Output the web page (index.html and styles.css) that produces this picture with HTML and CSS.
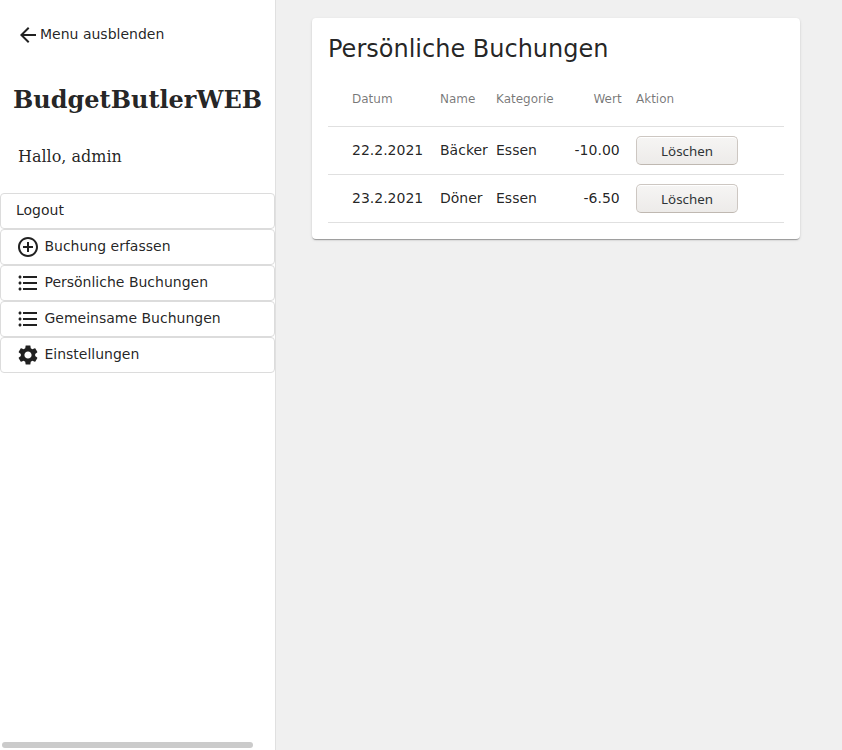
FILE: index.html
```html
<!DOCTYPE html>
<html lang="de">
<head>
<meta charset="utf-8">
<title>BudgetButlerWEB</title>
<link rel="stylesheet" href="styles.css">
</head>
<body>
<nav class="sidebar">
  <button class="toggle"><svg class="icon" viewBox="0 0 24 24"><path d="M20 11H7.83l5.59-5.59L12 4l-8 8 8 8 1.41-1.41L7.83 13H20v-2z"/></svg><span>Menu ausblenden</span></button>
  <h1 class="brand">BudgetButlerWEB</h1>
  <p class="greeting">Hallo, admin</p>
  <div class="menu">
    <a class="item"><span>Logout</span></a>
    <a class="item"><svg class="icon" viewBox="0 0 24 24"><path d="M13 7h-2v4H7v2h4v4h2v-4h4v-2h-4V7zm-1-5C6.48 2 2 6.48 2 12s4.48 10 10 10 10-4.48 10-10S17.52 2 12 2zm0 18c-4.41 0-8-3.59-8-8s3.59-8 8-8 8 3.59 8 8-3.59 8-8 8z"/></svg><span>Buchung erfassen</span></a>
    <a class="item"><svg class="icon" viewBox="0 0 24 24"><path d="M4 10.5c-.83 0-1.5.67-1.5 1.5s.67 1.5 1.5 1.5 1.5-.67 1.5-1.5-.67-1.5-1.5-1.5zm0-6c-.83 0-1.5.67-1.5 1.5S3.170 7.500 4 7.500 5.500 6.830 5.500 6 4.830 4.500 4 4.500zm0 12c-.83 0-1.5.68-1.5 1.5s.68 1.5 1.5 1.5 1.5-.68 1.5-1.5-.67-1.5-1.5-1.5zM7 19h14v-2H7v2zm0-6h14v-2H7v2zm0-8v2h14V5H7z"/></svg><span>Persönliche Buchungen</span></a>
    <a class="item"><svg class="icon" viewBox="0 0 24 24"><path d="M4 10.5c-.83 0-1.5.67-1.5 1.5s.67 1.5 1.5 1.5 1.5-.67 1.5-1.5-.67-1.5-1.5-1.5zm0-6c-.83 0-1.5.67-1.5 1.5S3.170 7.500 4 7.500 5.500 6.830 5.500 6 4.830 4.500 4 4.500zm0 12c-.83 0-1.5.68-1.5 1.5s.68 1.5 1.5 1.5 1.5-.68 1.5-1.5-.67-1.5-1.5-1.5zM7 19h14v-2H7v2zm0-6h14v-2H7v2zm0-8v2h14V5H7z"/></svg><span>Gemeinsame Buchungen</span></a>
    <a class="item"><svg class="icon" viewBox="0 0 24 24"><path d="M19.140 12.940c.04-.3.06-.61.06-.94 0-.32-.02-.64-.07-.94l2.030-1.580c.18-.14.23-.41.12-.61l-1.920-3.320c-.12-.22-.37-.29-.59-.22l-2.390.96c-.5-.38-1.030-.7-1.620-.94l-.36-2.540c-.04-.24-.24-.41-.48-.41h-3.840c-.24 0-.43.17-.47.41l-.36 2.540c-.59.24-1.130.57-1.620.94l-2.390-.96c-.22-.08-.47 0-.59.22L2.740 8.870c-.12.21-.08.47.12.61l2.030 1.580c-.05.3-.09.63-.09.94s.02.64.07.94l-2.030 1.580c-.18.14-.23.41-.12.61l1.920 3.320c.12.22.37.29.59.22l2.390-.96c.5.38 1.030.7 1.620.94l.36 2.540c.05.24.24.41.48.41h3.840c.24 0 .44-.17.47-.41l.36-2.540c.59-.24 1.130-.56 1.620-.94l2.390.96c.22.08.47 0 .59-.22l1.920-3.320c.12-.22.07-.47-.12-.61l-2.010-1.580zM12 15.600c-1.980 0-3.600-1.620-3.600-3.600s1.620-3.600 3.600-3.600 3.600 1.620 3.600 3.600-1.620 3.600-3.600 3.600z"/></svg><span>Einstellungen</span></a>
  </div>
  <div class="scrollbar"></div>
</nav>
<main class="content">
  <section class="card">
    <h2 class="title">Persönliche Buchungen</h2>
    <table class="bookings">
      <thead><tr><th class="date">Datum</th><th class="name">Name</th><th class="category">Kategorie</th><th class="value">Wert</th><th>Aktion</th></tr></thead>
      <tbody>
        <tr><td class="date">22.2.2021</td><td>Bäcker</td><td>Essen</td><td class="value">-10.00</td><td class="action"><button class="delete">Löschen</button></td></tr>
        <tr><td class="date">23.2.2021</td><td>Döner</td><td>Essen</td><td class="value">-6.50</td><td class="action"><button class="delete">Löschen</button></td></tr>
      </tbody>
    </table>
  </section>
</main>
</body>
</html>
```
FILE: styles.css
```css
* { box-sizing: border-box; }
body {
  margin: 0;
  height: 750px;
  display: flex;
  overflow: hidden;
  background: #f0f0f0;
  color: rgba(0, 0, 0, .87);
  font: 14px/20px "DejaVu Sans", sans-serif;
}
.sidebar {
  width: 276px;
  height: 750px;
  flex: none;
  display: flex;
  flex-direction: column;
  background: #fff;
  border-right: 1px solid #e0e0e0;
}
.icon { width: 24px; height: 24px; flex: none; fill: currentColor; }
.toggle {
  display: flex;
  align-items: center;
  height: 36px;
  margin: 17px 0 0 16px;
  padding: 0;
  border: 0;
  background: none;
  color: inherit;
  font: inherit;
}
.toggle span { margin-top: -2px; }
.brand {
  margin: 31px 0 0 13px;
  font: bold 24px/32px "DejaVu Serif", serif;
}
.greeting {
  margin: 31px 0 0 18px;
  font: 16px/20px "DejaVu Serif", serif;
}
.menu { margin-top: 26px; }
.item {
  display: flex;
  align-items: center;
  height: 36px;
  padding-left: 15px;
  border: 1px solid #dcdcdc;
  border-radius: 4px;
}
.item .icon { margin-right: 4.45px; }
.item span { margin-top: -2px; }
.scrollbar {
  width: 251px;
  height: 6px;
  margin: auto 0 2px 2px;
  border-radius: 3px;
  background: #cbcbcb;
}
.content { flex: 1; padding: 18px 42px 0 36px; }
.card {
  height: 221px;
  padding: 15px 16px 16px;
  border-radius: 4px;
  background: #fff;
  box-shadow: 0 2px 1px -1px rgba(0,0,0,.2), 0 1px 1px rgba(0,0,0,.14), 0 1px 3px rgba(0,0,0,.12);
}
.title { margin: 0 0 6px; font-size: 24px; font-weight: 400; line-height: 32px; }
.bookings { width: 456px; table-layout: fixed; border-collapse: separate; border-spacing: 0; }
th, td { padding: 0; border-bottom: 1px solid #e0e0e0; text-align: left; }
th { height: 56px; color: rgba(0,0,0,.54); font-size: 12px; font-weight: 400; }
td { height: 48px; padding-bottom: 2px; }
td.action { padding-bottom: 0; }
.date { width: 112px; padding-left: 24px; }
.name { width: 56px; }
.category { width: 66px; }
.value { width: 74px; padding-right: 16.3px; text-align: right; }
th.value { padding-right: 14.4px; }
.delete {
  display: block;
  width: 102px;
  height: 29px;
  padding: 0;
  border: 1px solid #cdc7c2;
  border-bottom-color: #bfb8b1;
  border-radius: 5px;
  background: linear-gradient(#f6f5f4, #edebe9);
  box-shadow: inset 0 1px #fff;
  color: #2e3436;
  font: 13.333px/20px "Noto Sans", sans-serif;
}
```
